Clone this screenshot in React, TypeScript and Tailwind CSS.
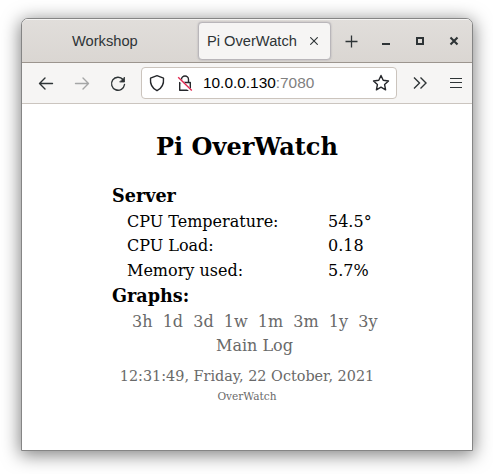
const stats = [
  { label: 'CPU Temperature:', value: '54.5°' },
  { label: 'CPU Load:', value: '0.18' },
  { label: 'Memory used:', value: '5.7%' },
];

const ranges = ['3h', '1d', '3d', '1w', '1m', '3m', '1y', '3y'];

function TitleBar() {
  return (
    <div className="flex h-11 shrink-0 border-b border-[#9c958e] bg-gradient-to-b from-[#e1dedb] to-[#dad6d2] pt-[3px] text-[14.67px] text-[#2e3436] shadow-[inset_0_1px_0_#f5f4f3]">
      <div className="flex h-[38px] w-[176px] items-center pl-[50px]">Workshop</div>
      <div className="flex h-[38px] w-[133px] items-center rounded border border-[#b9b6ba] bg-[#f6f5f4] pl-2 shadow-[0_0_2px_#aaa7ac]">
        <span className="whitespace-nowrap">Pi OverWatch</span>
        <svg className="ml-[13px]" width="8" height="8" viewBox="0 0 8 8" fill="none" stroke="#2e3436" strokeWidth="1.1">
          <path d="M.3.3l7.4 7.4M7.7.3L.3 7.7" />
        </svg>
      </div>
      <svg className="mt-[-3px]" width="141" height="43" viewBox="331 19 141 43" fill="none" stroke="#2e3436">
        <path d="M345.5 41.5h12M351.5 35.5v12" strokeWidth="1.3" />
        <path d="M382 44h8" strokeWidth="2" />
        <path d="M417 38h6v6h-6z" strokeWidth="2" />
        <path d="M450.5 37.5l7 7M457.5 37.5l-7 7" strokeWidth="2.1" />
      </svg>
    </div>
  );
}

function ToolBar() {
  return (
    <div className="flex h-[41px] shrink-0 items-center border-b border-[#cbc5bf] bg-[#f6f5f4]">
      <svg width="119" height="40" viewBox="22 63 119 40" fill="none" strokeLinecap="round" strokeLinejoin="round" strokeWidth="1.4">
        <path d="M52.500 83.500h-13M45 78l-5.500 5.500L45 89" stroke="#2e3436" />
        <path d="M75.500 83.500h13M83 78l5.500 5.500L83 89" stroke="#a5a6a6" />
        <path d="M123 79.500a6.500 6.500 0 1 0 1.500 5" stroke="#2e3436" />
        <path d="M124.500 77.500v4.500h-4.500z" fill="#2e3436" stroke="#2e3436" strokeWidth=".8" />
      </svg>
      <div className="flex h-8 w-64 items-center rounded border border-[#cbc4bd] bg-white">
        <svg width="61" height="30" viewBox="142 68 61 30" fill="none" stroke="#25272b" strokeWidth="1.4" strokeLinejoin="round">
          <path d="M157 75.700l6.500 2.500c.5 5.500-1.500 10-6.500 12.500-5-2.500-7-7-6.500-12.500z" />
          <path d="M181.500 82.500v-3a3.500 3.500 0 0 1 7 0v3M179.700 82.500h10.600v7.700h-10.600z" />
          <path d="M177.600 77.700l13.600 13.400" stroke="#fff" strokeWidth="3" />
          <path d="M178.200 77.200l13.600 13.400" stroke="#e22850" strokeWidth="1.4" />
        </svg>
        <span className="w-[169px] text-[15.400px] text-black">
          10.0.0.130<span className="text-[#808080]">:7080</span>
        </span>
        <svg width="18" height="18" viewBox="0 0 18 18" fill="none" stroke="#25272b" strokeWidth="1.4" strokeLinejoin="round">
          <path d="M9 1.500l2.200 4.800 5.300.7-3.900 3.600 1 5.200L9 13.200l-4.600 2.600 1-5.200L1.500 7l5.300-.7z" />
        </svg>
      </div>
      <svg width="75" height="40" viewBox="397 63 75 40" fill="none" stroke="#2e3436" strokeWidth="1.4">
        <path d="M414 77.500l5.500 5.500-5.500 5.500M420.500 77.500L426 83l-5.500 5.500" />
        <path d="M450 78.500h12M450 82.500h12M450 87.500h12" strokeWidth="1.2" />
      </svg>
    </div>
  );
}

export default function App() {
  return (
    <div className="h-[474px] w-[493px] overflow-hidden bg-white pt-[18px] pl-[21px] font-['Liberation_Sans',sans-serif]">
      <div className="flex h-[433px] w-[452px] flex-col overflow-hidden rounded-t-[7px] border border-[#858585] bg-white shadow-[0_3px_18px_1px_rgba(0,0,0,0.5)]">
        <TitleBar />
        <ToolBar />
        <main className="flex flex-col pt-[29px] pl-[90px] font-['DejaVu_Serif',serif] text-base leading-[24.500px] text-black">
          <h1 className="w-[270px] text-center text-2xl leading-7 font-bold">Pi OverWatch</h1>
          <h2 className="mt-[22px] mb-[0.500px] text-[17.600px] leading-[26px] font-bold">Server</h2>
          {stats.map((s) => (
            <div key={s.label} className="flex pl-[15px]">
              <span className="w-[201px]">{s.label}</span>
              <span>{s.value}</span>
            </div>
          ))}
          <h2 className="mb-[0.500px] text-[17.600px] leading-[26px] font-bold">Graphs:</h2>
          <nav className="flex gap-[10.170px] pl-5 text-[#696969]">
            {ranges.map((r) => (
              <a key={r}>{r}</a>
            ))}
          </nav>
          <a className="w-[285px] text-center text-[#696969]">Main Log</a>
          <p className="mt-[5px] w-[270px] text-center text-[14.4px] leading-6 text-[#696969]">12:31:49, Friday, 22 October, 2021</p>
          <p className="w-[270px] text-center text-[10.560px] leading-4 text-[#696969]">OverWatch</p>
        </main>
      </div>
    </div>
  );
}
